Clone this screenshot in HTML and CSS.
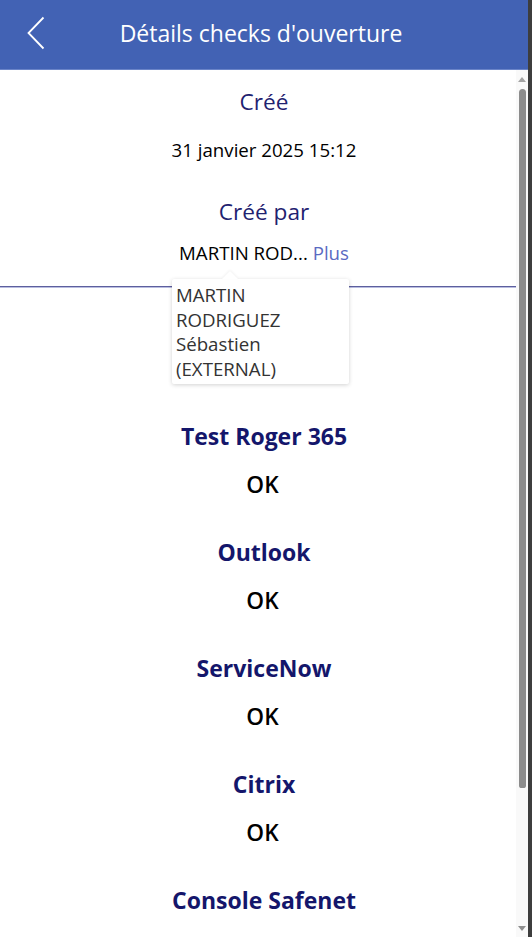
FILE: index.html
```html
<!DOCTYPE html>
<html lang="fr">
<head>
<meta charset="utf-8">
<title>Détails checks d'ouverture</title>
<link rel="stylesheet" href="styles.css">
</head>
<body>
<div class="app">
  <div class="screen">
    <header class="topbar">
      <button class="back" aria-label="Retour">
        <svg width="20" height="34" viewBox="0 0 20 34"><path d="M17.5 1.5 L2.5 17 L17.5 32.5" fill="none" stroke="#fff" stroke-width="1.8"/></svg>
      </button>
      <h1 class="title">Détails checks d'ouverture</h1>
    </header>
    <main class="content">
      <section class="meta">
        <div class="meta-label">Créé</div>
        <div class="meta-value date">31 janvier 2025 15:12</div>
        <div class="meta-label by">Créé par</div>
        <div class="meta-value name">MARTIN ROD... <span class="more">Plus</span></div>
        <div class="divider"></div>
      </section>
      <section class="checks">
        <div class="check"><div class="check-name">Test Roger 365</div><div class="check-value">OK</div></div>
        <div class="check"><div class="check-name">Outlook</div><div class="check-value">OK</div></div>
        <div class="check"><div class="check-name">ServiceNow</div><div class="check-value">OK</div></div>
        <div class="check"><div class="check-name">Citrix</div><div class="check-value">OK</div></div>
        <div class="check"><div class="check-name">Console Safenet</div><div class="check-value">OK</div></div>
      </section>
    </main>
    <div class="tooltip">MARTIN RODRIGUEZ Sébastien (EXTERNAL)</div>
    <div class="scrollbar">
      <div class="arrow up"></div>
      <div class="thumb"></div>
      <div class="arrow down"></div>
    </div>
  </div>
  <div class="edge"></div>
</div>
</body>
</html>
```

FILE: styles.css
```css
html, body {
  margin: 0;
  padding: 0;
  height: 100%;
  overflow: hidden;
  background: #fff;
  font-family: "Open Sans", "Noto Sans", sans-serif;
}

.app {
  display: flex;
  height: 937px;
}

.screen {
  position: relative;
  width: 528px;
  height: 937px;
  overflow: hidden;
}

.edge {
  width: 4px;
  background: #3d3d3d;
}

.topbar {
  height: 69px;
  background: #4262b4;
  border-bottom: 1px solid #6a84c8;
  display: flex;
  align-items: center;
  position: relative;
}

.back {
  position: absolute;
  left: 26px;
  top: 16px;
  width: 20px;
  height: 34px;
  padding: 0;
  border: 0;
  background: none;
}

.title {
  flex: 1;
  margin: 0;
  text-align: center;
  color: #fff;
  font-weight: 400;
  font-size: 23px;
  line-height: 30px;
  margin-top: -4px;
  margin-left: -6px;
}

.content {
  text-align: center;
}

.meta {
  padding-top: 17px;
}

.meta-label {
  font-size: 22.67px;
  line-height: 30px;
  color: #1f2270;
}

.meta-label.by {
  margin-top: 32px;
}

.meta-value {
  font-size: 18.67px;
  color: #000;
}

.date {
  margin-top: 18px;
  line-height: 30px;
}

.name {
  margin-top: 14px;
  line-height: 24px;
}

.more {
  color: #5a6ac2;
}

.divider {
  margin-top: 21px;
  width: 516px;
  height: 1px;
  background: #5d5f9e;
  border-bottom: 1px solid #b9bde0;
}

.checks {
  padding-top: 133px;
}

.check {
  margin-bottom: 37px;
}

.check-name {
  font-size: 23px;
  line-height: 30px;
  font-weight: 700;
  color: #14166b;
}

.check-value {
  margin-top: 19px;
  margin-right: 3px;
  font-size: 22.67px;
  line-height: 30px;
  font-weight: 600;
  color: #000;
}

.tooltip {
  position: absolute;
  left: 172px;
  top: 279px;
  width: 171px;
  height: 99px;
  padding: 4px 2px 2px 4px;
  background: #fff;
  box-shadow: 0 1px 4px rgba(0, 0, 0, 0.18);
  border-radius: 2px;
  font-size: 18.67px;
  line-height: 24.5px;
  color: #333;
  text-align: left;
}

.tooltip::before {
  content: "";
  position: absolute;
  left: 50px;
  top: -8px;
  width: 0;
  height: 0;
  border-left: 8px solid transparent;
  border-right: 8px solid transparent;
  border-bottom: 8px solid #fff;
  filter: drop-shadow(0 -1px 1px rgba(0, 0, 0, 0.06));
}

.scrollbar {
  position: absolute;
  right: 0;
  top: 70px;
  bottom: 0;
  width: 12px;
  background: #f9f9f9;
  display: flex;
  flex-direction: column;
  align-items: center;
}

.arrow {
  width: 0;
  height: 0;
  border-left: 4px solid transparent;
  border-right: 4px solid transparent;
}

.arrow.up {
  margin-top: 7px;
  border-bottom: 5px solid #a3a3a3;
}

.arrow.down {
  margin-top: auto;
  margin-bottom: 6px;
  border-top: 5px solid #8e8e8e;
}

.thumb {
  margin-top: 7px;
  width: 7px;
  height: 699px;
  background: #8c8c8c;
  border-radius: 4px 4px 3px 3px;
}
```
